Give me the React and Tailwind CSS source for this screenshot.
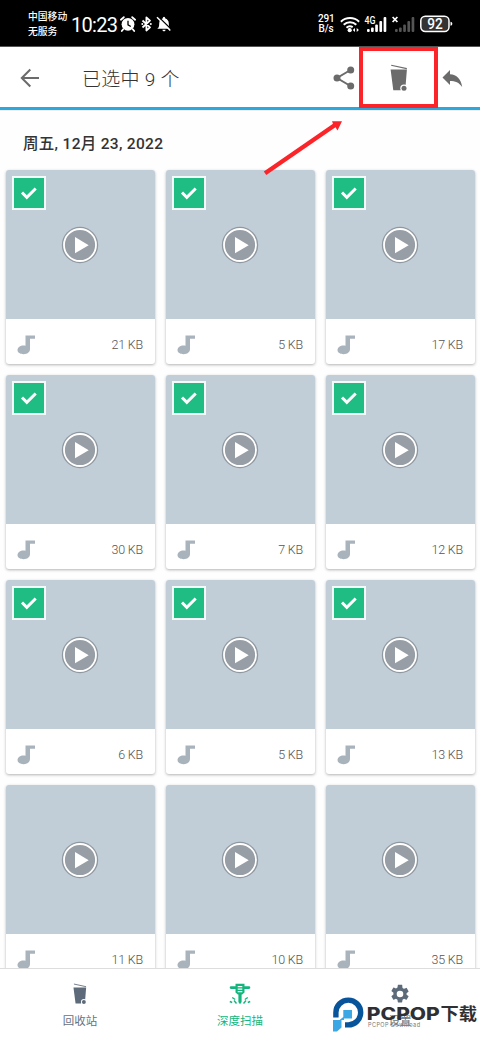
import React from 'react';

const files = [
    { size: '21 KB', selected: true },
    { size: '5 KB', selected: true },
    { size: '17 KB', selected: true },
    { size: '30 KB', selected: true },
    { size: '7 KB', selected: true },
    { size: '12 KB', selected: true },
    { size: '6 KB', selected: true },
    { size: '5 KB', selected: true },
    { size: '13 KB', selected: true },
    { size: '11 KB', selected: false },
    { size: '10 KB', selected: false },
    { size: '35 KB', selected: false },
];

const AlarmIcon = () => (
    <svg width="16" height="16" viewBox="0 0 16 16" className="ml-[3px]">
        <circle cx="8" cy="8.3" r="6.4" fill="#fff" />
        <path d="M0.9 3.7 3.8 1.2M15.1 3.7 12.2 1.2M3.2 13.2 1.8 15M12.8 13.2 14.2 15" stroke="#fff" strokeWidth="1.8" strokeLinecap="round" />
        <path d="M8 4.7v4.1l2.8 1.7" fill="none" stroke="#000" strokeWidth="1.3" />
    </svg>
);

const BluetoothIcon = () => (
    <svg width="11" height="16" viewBox="0 0 11 16" className="ml-[5px]">
        <path d="M1.5 4.5 9 11.3 5.4 14.5V1.5L9 4.7 1.5 11.5" fill="none" stroke="#fff" strokeWidth="1.8" strokeLinejoin="round" />
        <circle cx="1.3" cy="8" r="1" fill="#fff" />
        <circle cx="9.8" cy="8" r="1" fill="#fff" />
    </svg>
);

const BellOffIcon = () => (
    <svg width="16" height="16" viewBox="0 0 16 16" className="ml-[4px]">
        <path d="M1.2 12.8c1.5-1.2 2-2.1 2-5.4 0-2.6 1.6-4.4 3.5-4.9C6.9 1.5 7.3.7 8 .7s1.1.8 1.3 1.8c1.9.5 3.5 2.3 3.5 4.9 0 3.3.5 4.2 2 5.4z" fill="#fff" />
        <path d="M6.4 13.7h3.2c-.2 1-.8 1.5-1.6 1.5s-1.4-.5-1.6-1.5z" fill="#fff" />
        <path d="M1.900 0.300 15.200 13.300" stroke="#000" strokeWidth="1.3" />
        <path d="M1 1.200 14.300 14.500" stroke="#fff" strokeWidth="1.5" />
    </svg>
);

const WifiIcon = () => (
    <svg width="20" height="17" viewBox="0 0 20 17" className="ml-[6px]">
        <path d="M.9 5.7a13.3 13.3 0 0 1 18.2 0M3.7 8.8a9.2 9.2 0 0 1 12.6 0M6.5 11.7a5.2 5.2 0 0 1 6.2-.5" fill="none" stroke="#fff" strokeWidth="2" />
        <circle cx="9.7" cy="14.2" r="2.1" fill="#fff" />
        <path d="m12.8 13.9 2.2-2v4zM18.9 13.9l-2.2-2v4z" fill="#fff" />
    </svg>
);

const SignalBars = ({ fill }) => (
    <g fill={fill}>
        <rect x="3" y="13" width="2.7" height="3" rx="1" />
        <rect x="7" y="11.5" width="2.7" height="4.5" rx="1" />
        <rect x="11.2" y="8.5" width="2.7" height="7.5" rx="1" />
        <rect x="15.4" y="5" width="2.7" height="11" rx="1" />
        <rect x="19.6" y="1" width="2.7" height="15" rx="1" />
    </g>
);

const StatusBar = () => (
    <div className="flex h-[47px] shrink-0 items-center border-b border-[#555] bg-black pt-[2px] pl-[28px] text-white">
        <div className="w-[43px] text-[9.8px] leading-[15px] font-medium whitespace-nowrap">
            <div>中国移动</div>
            <div>无服务</div>
        </div>
        <div className="w-[46px] pt-px font-['Roboto'] text-[20px] leading-none tracking-[-0.7px] whitespace-nowrap">10:23</div>
        <AlarmIcon />
        <BluetoothIcon />
        <BellOffIcon />
        <div className="ml-[146px] w-[16px] text-center font-['Roboto'] text-[10px] leading-[10px] font-medium tracking-[-0.2px] whitespace-nowrap">
            <div>291</div>
            <div>B/s</div>
        </div>
        <WifiIcon />
        <svg width="24" height="17" viewBox="0 0 24 17" className="ml-[4px]">
            <SignalBars fill="#fff" />
            <text x="0.5" y="7.8" fontSize="10" fontWeight="500" fill="#fff" textLength="11" lengthAdjust="spacingAndGlyphs" className="font-['Roboto']">4G</text>
        </svg>
        <svg width="24" height="17" viewBox="0 0 24 17" className="ml-[4px]">
            <SignalBars fill="#555" />
            <path d="m.6 1 4.8 5M5.4 1 .6 6" stroke="#fff" strokeWidth="1.7" />
        </svg>
        <svg width="33" height="18" viewBox="0 0 33 18" className="ml-[4px]">
            <rect x="0.8" y="1.2" width="28.2" height="15.4" rx="4.5" fill="#333" stroke="#fff" strokeWidth="1.5" />
            <path d="M30.5 6.8v4c1.3-.3 1.8-1 1.8-2s-.5-1.700-1.800-2z" fill="#fff" />
            <text x="7.2" y="14" fontSize="14.5" fontWeight="500" fill="#fff" textLength="15.5" lengthAdjust="spacingAndGlyphs" className="font-['Roboto']">92</text>
        </svg>
    </div>
);

const TrashIcon = ({ className }) => (
    <svg viewBox="0 0 18 28" className={className}>
        <path d="M1.2 1.2 16.8 4.6" stroke="currentColor" strokeWidth="1.1" />
        <path d="M.6 5.5h16.3l-1.3 16.2h-1.5l-3.5 4.6H3.3z" fill="currentColor" />
        <circle cx="14" cy="24.2" r="3.7" fill="#fff" />
        <circle cx="14" cy="24.2" r="2.5" fill="currentColor" />
    </svg>
);

const Header = () => (
    <div className="flex h-[63px] shrink-0 items-center border-b-[3px] border-[#2ba9dc] bg-white pl-[20px] text-[#6b6b6b]">
        <svg width="20" height="20" viewBox="0 0 20 20" className="mt-[2px]">
            <path d="M19 10H2.2M10.3 1.5 1.8 10l8.5 8.5" fill="none" stroke="currentColor" strokeWidth="2" />
        </svg>
        <div className="mt-[4px] ml-[42px] flex-1 text-[19px] leading-none font-light tracking-[0.3px] whitespace-nowrap text-[#333]">已选中 9 个</div>
        <svg width="22" height="24" viewBox="0 0 22 24" className="mt-px">
            <path d="M17.5 4 4 12l13.5 8" fill="none" stroke="currentColor" strokeWidth="2" />
            <circle cx="17.7" cy="4" r="3.5" fill="currentColor" />
            <circle cx="4" cy="12" r="3.5" fill="currentColor" />
            <circle cx="17.7" cy="20" r="3.5" fill="currentColor" />
        </svg>
        <div className="ml-[4px] flex h-[61px] w-[79px] items-center justify-center border-4 border-[#fb2429]">
            <TrashIcon className="mt-px h-[28px] w-[18px]" />
        </div>
        <svg width="21" height="18" viewBox="0 0 20 18" className="mt-[3px] mr-[17px] ml-[4px]">
            <path d="M0 7.5 7.5 0v4.3C14.3 4.8 18.3 8.8 19.7 17 16.5 12.5 12.8 11 7.5 11v4z" fill="currentColor" />
        </svg>
    </div>
);

const Card = ({ size, selected }) => (
    <div className="relative h-[194px] overflow-hidden rounded-[3px] bg-white shadow-[0_1px_3px_rgba(0,0,0,0.3)]">
        <div className="flex h-[149px] items-center justify-center bg-[#c1cdd7]">
            <svg width="38" height="38" viewBox="0 0 38 38" className="-ml-px">
                <circle cx="19" cy="19" r="18.2" fill="#8f979f" />
                <circle cx="19" cy="19" r="16" fill="#979ea6" stroke="#fff" strokeWidth="1.8" />
                <path d="M14 11v16.3L27.7 19.2z" fill="#fff" />
            </svg>
        </div>
        <div className="flex h-[45px] items-center justify-between pt-[7px] pr-[12px] pl-[11px]">
            <svg width="19" height="20" viewBox="0 0 19 20">
                <path d="M8.5 0.5H18v3.300h-5V14c0 3.200-2.800 5.200-6.300 5.200C3.200 19.200.5 17.500.5 15s2.700-4.600 6-4.600c.7 0 1.400.1 2 .3z" fill="#a9b3bc" />
            </svg>
            <span className="font-['Roboto'] text-[12.5px] font-light tracking-[-0.2px] text-[#555]">{size}</span>
        </div>
        {selected && (
            <div className="absolute top-[6px] left-[6px] flex size-[34px] items-center justify-center border-2 border-[#f2fbf8] bg-[#1fbd83]">
                <svg width="18" height="14" viewBox="0 0 18 14">
                    <path d="m2 6.5 4.8 4.8L15.7 2.5" fill="none" stroke="#fff" strokeWidth="3" />
                </svg>
            </div>
        )}
    </div>
);

const DrillIcon = () => (
    <svg width="22" height="22" viewBox="0 0 22 22" fill="#13b57d">
        <path d="M6.5 .8h9v2.5H20a1.3 1.3 0 0 1 0 2.6h-4.5V9.5L13.2 11.5H8.8L6.5 9.5V5.9H2a1.3 1.3 0 0 1 0-2.6h4.5z" />
        <path d="M9.4 11h3.2v8L11 21.3 9.4 19z" />
        <path d="M8.7 3.6h4.6M8.7 6.1h4.6M8.7 8.6h4.6" stroke="#fff" strokeWidth="1.1" />
        <path d="m3.2 14.5 3 2M.8 18.5l2.4 1M5 17.5l2.5 3M18.8 14.5l-3 2M21.2 18.5l-2.4 1M17 17.5l-2.5 3" stroke="#13b57d" strokeWidth="1.4" />
    </svg>
);

const GearIcon = () => (
    <svg width="22" height="22" viewBox="0 0 24 24" fill="#5c6a79">
        <path d="M19.14 12.94c.04-.3.06-.61.06-.94s-.02-.64-.07-.94l2.03-1.58a.49.49 0 0 0 .12-.61l-1.92-3.32a.49.49 0 0 0-.59-.22l-2.39.96c-.5-.38-1.03-.7-1.62-.94l-.36-2.54A.48.48 0 0 0 13.92 2h-3.84c-.24 0-.43.17-.47.41l-.36 2.54c-.59.24-1.13.57-1.62.94l-2.39-.96a.48.48 0 0 0-.59.22L2.74 8.47c-.12.21-.08.47.12.61l2.03 1.58c-.05.3-.09.63-.09.94s.02.64.07.94l-2.03 1.58a.49.49 0 0 0-.12.61l1.92 3.32c.12.22.37.29.59.22l2.39-.96c.5.38 1.03.7 1.62.94l.36 2.54c.05.24.24.41.48.41h3.84c.24 0 .44-.17.47-.41l.36-2.54c.59-.24 1.13-.56 1.62-.94l2.39.96c.22.08.47 0 .59-.22l1.92-3.32a.48.48 0 0 0-.12-.61zM12 15.6a3.6 3.6 0 1 1 0-7.2 3.6 3.6 0 0 1 0 7.2z" />
    </svg>
);

const NavItem = ({ icon, label, active }) => (
    <div className="flex flex-1 flex-col items-center pt-[14px]">
        <div className="flex h-[22px] items-center">{icon}</div>
        <div className={`mt-[8px] text-[11.5px] leading-[17px] ${active ? 'text-[#13b57d]' : 'text-[#66727f]'}`}>{label}</div>
    </div>
);

const Watermark = () => (
    <svg width="150" height="40" viewBox="330 994 150 40" className="absolute right-0 bottom-[6px]">
        <path d="M335.9 1017.5v-5a12.4 12.4 0 1 1 12.4 12.4H345" fill="none" stroke="#07549b" strokeWidth="5.4" />
        <path d="M343.3 1010h8.7v8.5h-8v1.5h-2.500v7.500l-4.500 4h-4V1020h6.5l3.800-3z" fill="#3ba8e5" />
        <text x="366.8" y="1020.3" fontSize="17" fontWeight="800" fill="#2f3033" textLength="73" lengthAdjust="spacingAndGlyphs" className="font-['Inter']">PCPOP</text>
        <text x="440.5" y="1020" fontSize="16.5" fontWeight="700" fill="#2f3033" textLength="36.5" lengthAdjust="spacingAndGlyphs" className="font-['Noto_Sans_CJK_SC']">下载</text>
        <text x="368" y="1027.3" fontSize="5.5" fill="#777" textLength="52" className="font-['Inter']">PCPOP Download</text>
    </svg>
);

const App = () => (
    <div className="relative flex h-[1040px] w-[480px] flex-col overflow-hidden bg-[#fefefe] font-['Roboto','Noto_Sans_CJK_SC',sans-serif]">
        <StatusBar />
        <Header />
        <div className="min-h-0 flex-1 overflow-hidden border-t border-[#eee] pr-[5px] pl-[6px]">
            <h2 className="h-[59px] pt-[22px] pl-[17px] text-[15.5px] leading-[23px] font-medium tracking-[0.3px] text-[#333]">周五, 12月 23, 2022</h2>
            <div className="grid grid-cols-3 gap-[11px]">
                {files.map((file, i) => (
                    <Card key={i} {...file} />
                ))}
            </div>
        </div>
        <div className="flex h-[72px] shrink-0 border-t border-[#ddd] bg-white">
            <NavItem icon={<TrashIcon className="h-[22px] w-[14px] text-[#5c6a79]" />} label="回收站" />
            <NavItem icon={<DrillIcon />} label="深度扫描" active />
            <NavItem icon={<GearIcon />} label="设置" />
        </div>

        <Watermark />

        {/* Pointer to the delete button */}
        <svg width="82" height="60" viewBox="0 0 82 60" className="absolute top-[117px] left-[262px]">
            <path d="M1.8 54.5 71 6.8 70 4.3 80 4.3 75.5 13.5 73.5 10.3 4.3 58z" fill="#fb2429" />
        </svg>
    </div>
);

export default App;
